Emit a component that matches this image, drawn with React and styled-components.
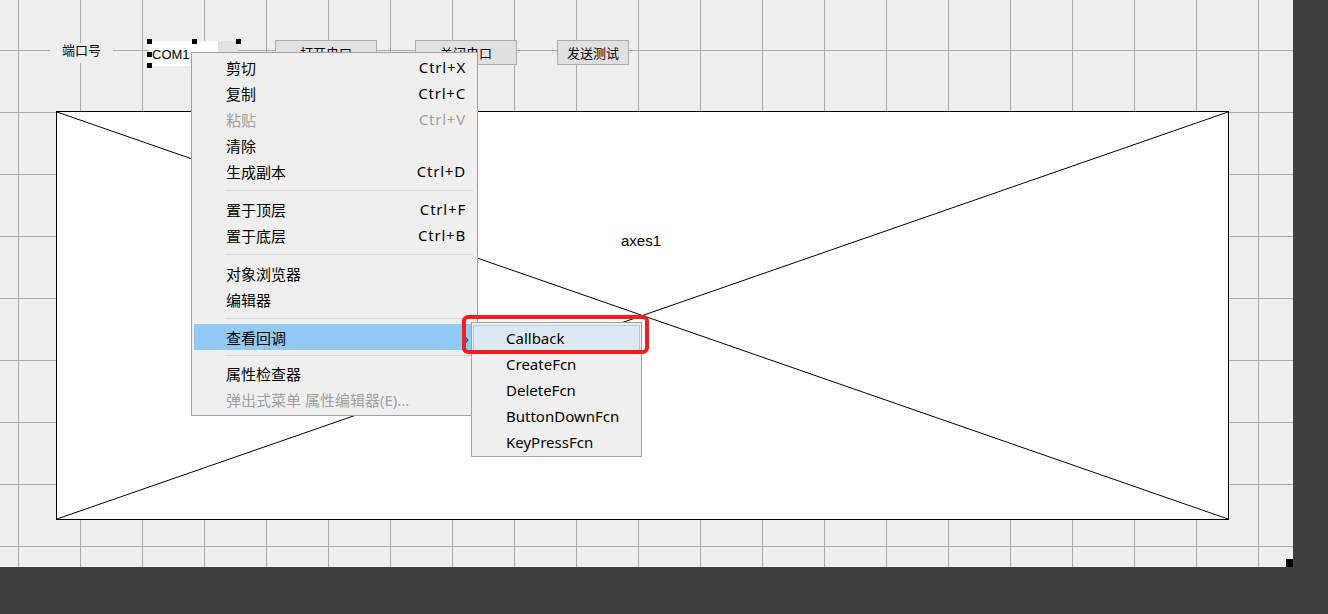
import React from "react";
import styled, { createGlobalStyle } from "styled-components";

const GlobalStyle = createGlobalStyle`
  html, body {
    margin: 0;
    padding: 0;
    background: #404040;
    width: 1328px;
    height: 614px;
    overflow: hidden;
  }
`;

// the GUIDE layout area, with its 62px grid
const Canvas = styled.div`
  position: relative;
  width: 1293px;
  height: 567px;
  background-color: #efefef;
  background-image: linear-gradient(to right, #a9a9a9 1px, transparent 1px),
    linear-gradient(to bottom, #a9a9a9 1px, transparent 1px);
  background-size: 62px 62px;
  background-position: 18px 50px;
  font-family: "Noto Sans", "Noto Sans CJK SC", sans-serif;
`;

const Placed = styled.div`
  position: absolute;
  left: ${(p) => p.$x}px;
  top: ${(p) => p.$y}px;
  width: ${(p) => p.$w}px;
  height: ${(p) => p.$h}px;
  box-sizing: border-box;
`;

const StaticText = styled(Placed)`
  background: #efefef;
  display: flex;
  justify-content: center;
  font-family: "Noto Sans CJK SC", sans-serif;
  font-size: 13px;
  line-height: 13px;
  color: #000;
`;

const PopupBox = styled(Placed)`
  display: flex;
  background: #fff;
  font-family: "Liberation Sans", Arial, sans-serif;
  font-size: 13px;
  color: #000;

  span {
    flex: 1;
    padding: 6px 0 0 3px;
  }

  i {
    width: 20px;
    background: #e3e3e3;
  }
`;

// black selection handles around the selected control
const Handle = styled.div`
  position: absolute;
  left: ${(p) => p.$x - 2}px;
  top: ${(p) => p.$y - 2}px;
  width: 5px;
  height: 5px;
  background: #000;
`;

const PushButton = styled(Placed)`
  display: flex;
  align-items: center;
  justify-content: center;
  background: #e1e1e1;
  border: 1px solid #adadad;
  font-family: "Noto Sans CJK SC", sans-serif;
  font-size: 13px;
  color: #000;
`;

const Axes = styled(Placed)`
  background: #fff;
  border: 1px solid #000;

  svg {
    position: absolute;
    inset: 0;
    width: 100%;
    height: 100%;
  }
`;

const AxesLabel = styled.div`
  position: absolute;
  left: 564px;
  top: 120px;
  font-family: "Liberation Sans", Arial, sans-serif;
  font-size: 15px;
  color: #000;
`;

const Menu = styled(Placed)`
  display: flex;
  flex-direction: column;
  padding: ${(p) => p.$pad || "1px 2px"};
  background: #f0f0f0;
  border: 1px solid #a0a0a0;
  font-family: "Noto Sans", "Noto Sans CJK SC", sans-serif;
  font-size: 15px;
  color: #000;
  z-index: ${(p) => p.$z || 5};
`;

const Item = styled.div`
  position: relative;
  display: flex;
  align-items: center;
  justify-content: space-between;
  height: 26px;
  flex-shrink: 0;
  padding: 0 9px 0 32px;
  color: ${(p) => (p.$disabled ? "#a0a0a0" : "#000")};
  background: ${(p) => (p.$active ? "#91c9f7" : "transparent")};
`;

const Shortcut = styled.span`
  letter-spacing: 0.8px;
`;

const Arrow = styled.span`
  position: absolute;
  right: 6px;
  top: 4px;
  font-size: 15px;
  color: #333;
`;

const Separator = styled.div`
  height: ${(p) => p.$h || 12}px;
  flex-shrink: 0;
  display: flex;
  align-items: center;
  padding: 0 2px 0 31px;

  &::after {
    content: "";
    flex: 1;
    height: 1px;
    background: #d7d7d7;
  }
`;

const SubItem = styled.div`
  display: flex;
  align-items: center;
  height: 26px;
  flex-shrink: 0;
  padding-left: 32px;
  box-sizing: border-box;
  border: 1px solid ${(p) => (p.$active ? "#9ecbf1" : "transparent")};
  background: ${(p) => (p.$active ? "#dde9f4" : "transparent")};
`;

const Callout = styled.div`
  position: absolute;
  left: 462px;
  top: 315px;
  width: 187px;
  height: 39px;
  box-sizing: border-box;
  border: 4px solid #f51d1d;
  border-radius: 6px;
  z-index: 7;
`;

const ResizeGrip = styled.div`
  position: absolute;
  right: 0;
  bottom: 0;
  width: 7px;
  height: 8px;
  background: #000;
`;

const mainMenu = [
  { label: "剪切", key: "Ctrl+X" },
  { label: "复制", key: "Ctrl+C" },
  { label: "粘贴", key: "Ctrl+V", disabled: true },
  { label: "清除" },
  { label: "生成副本", key: "Ctrl+D" },
  { sep: 12 },
  { label: "置于顶层", key: "Ctrl+F" },
  { label: "置于底层", key: "Ctrl+B" },
  { sep: 12 },
  { label: "对象浏览器" },
  { label: "编辑器" },
  { sep: 12 },
  { label: "查看回调", active: true, sub: true },
  { sep: 10 },
  { label: "属性检查器" },
  { label: "弹出式菜单 属性编辑器(E)...", disabled: true },
];

const callbacks = ["Callback", "CreateFcn", "DeleteFcn", "ButtonDownFcn", "KeyPressFcn"];

export default function App() {
  return (
    <>
      <GlobalStyle />
      <Canvas>
        <StaticText $x={50} $y={43} $w={63} $h={20}>
          端口号
        </StaticText>

        <PopupBox $x={149} $y={41} $w={89} $h={25}>
          <span>COM1</span>
          <i />
        </PopupBox>
        <Handle $x={149} $y={41} />
        <Handle $x={194} $y={41} />
        <Handle $x={238} $y={41} />
        <Handle $x={149} $y={54} />
        <Handle $x={149} $y={65} />

        <PushButton $x={275} $y={40} $w={102} $h={25}>
          打开串口
        </PushButton>
        <PushButton $x={415} $y={40} $w={102} $h={25}>
          关闭串口
        </PushButton>
        <PushButton $x={557} $y={40} $w={72} $h={25}>
          发送测试
        </PushButton>

        <Axes $x={56} $y={111} $w={1173} $h={409}>
          <svg viewBox="0 0 100 100" preserveAspectRatio="none">
            <line x1="0" y1="0" x2="100" y2="100" stroke="#000" strokeWidth="1" vectorEffect="non-scaling-stroke" />
            <line x1="100" y1="0" x2="0" y2="100" stroke="#000" strokeWidth="1" vectorEffect="non-scaling-stroke" />
          </svg>
          <AxesLabel>axes1</AxesLabel>
        </Axes>

        <Menu $x={191} $y={52} $w={287} $h={364}>
          {mainMenu.map((it, i) =>
            it.sep ? (
              <Separator key={i} $h={it.sep} />
            ) : (
              <Item key={i} $disabled={it.disabled} $active={it.active}>
                <span>{it.label}</span>
                {it.key && <Shortcut>{it.key}</Shortcut>}
                {it.sub && <Arrow>›</Arrow>}
              </Item>
            )
          )}
        </Menu>

        <Menu $x={471} $y={322} $w={171} $h={135} $z={6} $pad="2px 1px">
          {callbacks.map((c, i) => (
            <SubItem key={c} $active={i === 0}>
              {c}
            </SubItem>
          ))}
        </Menu>

        <Callout />
        <ResizeGrip />
      </Canvas>
    </>
  );
}
